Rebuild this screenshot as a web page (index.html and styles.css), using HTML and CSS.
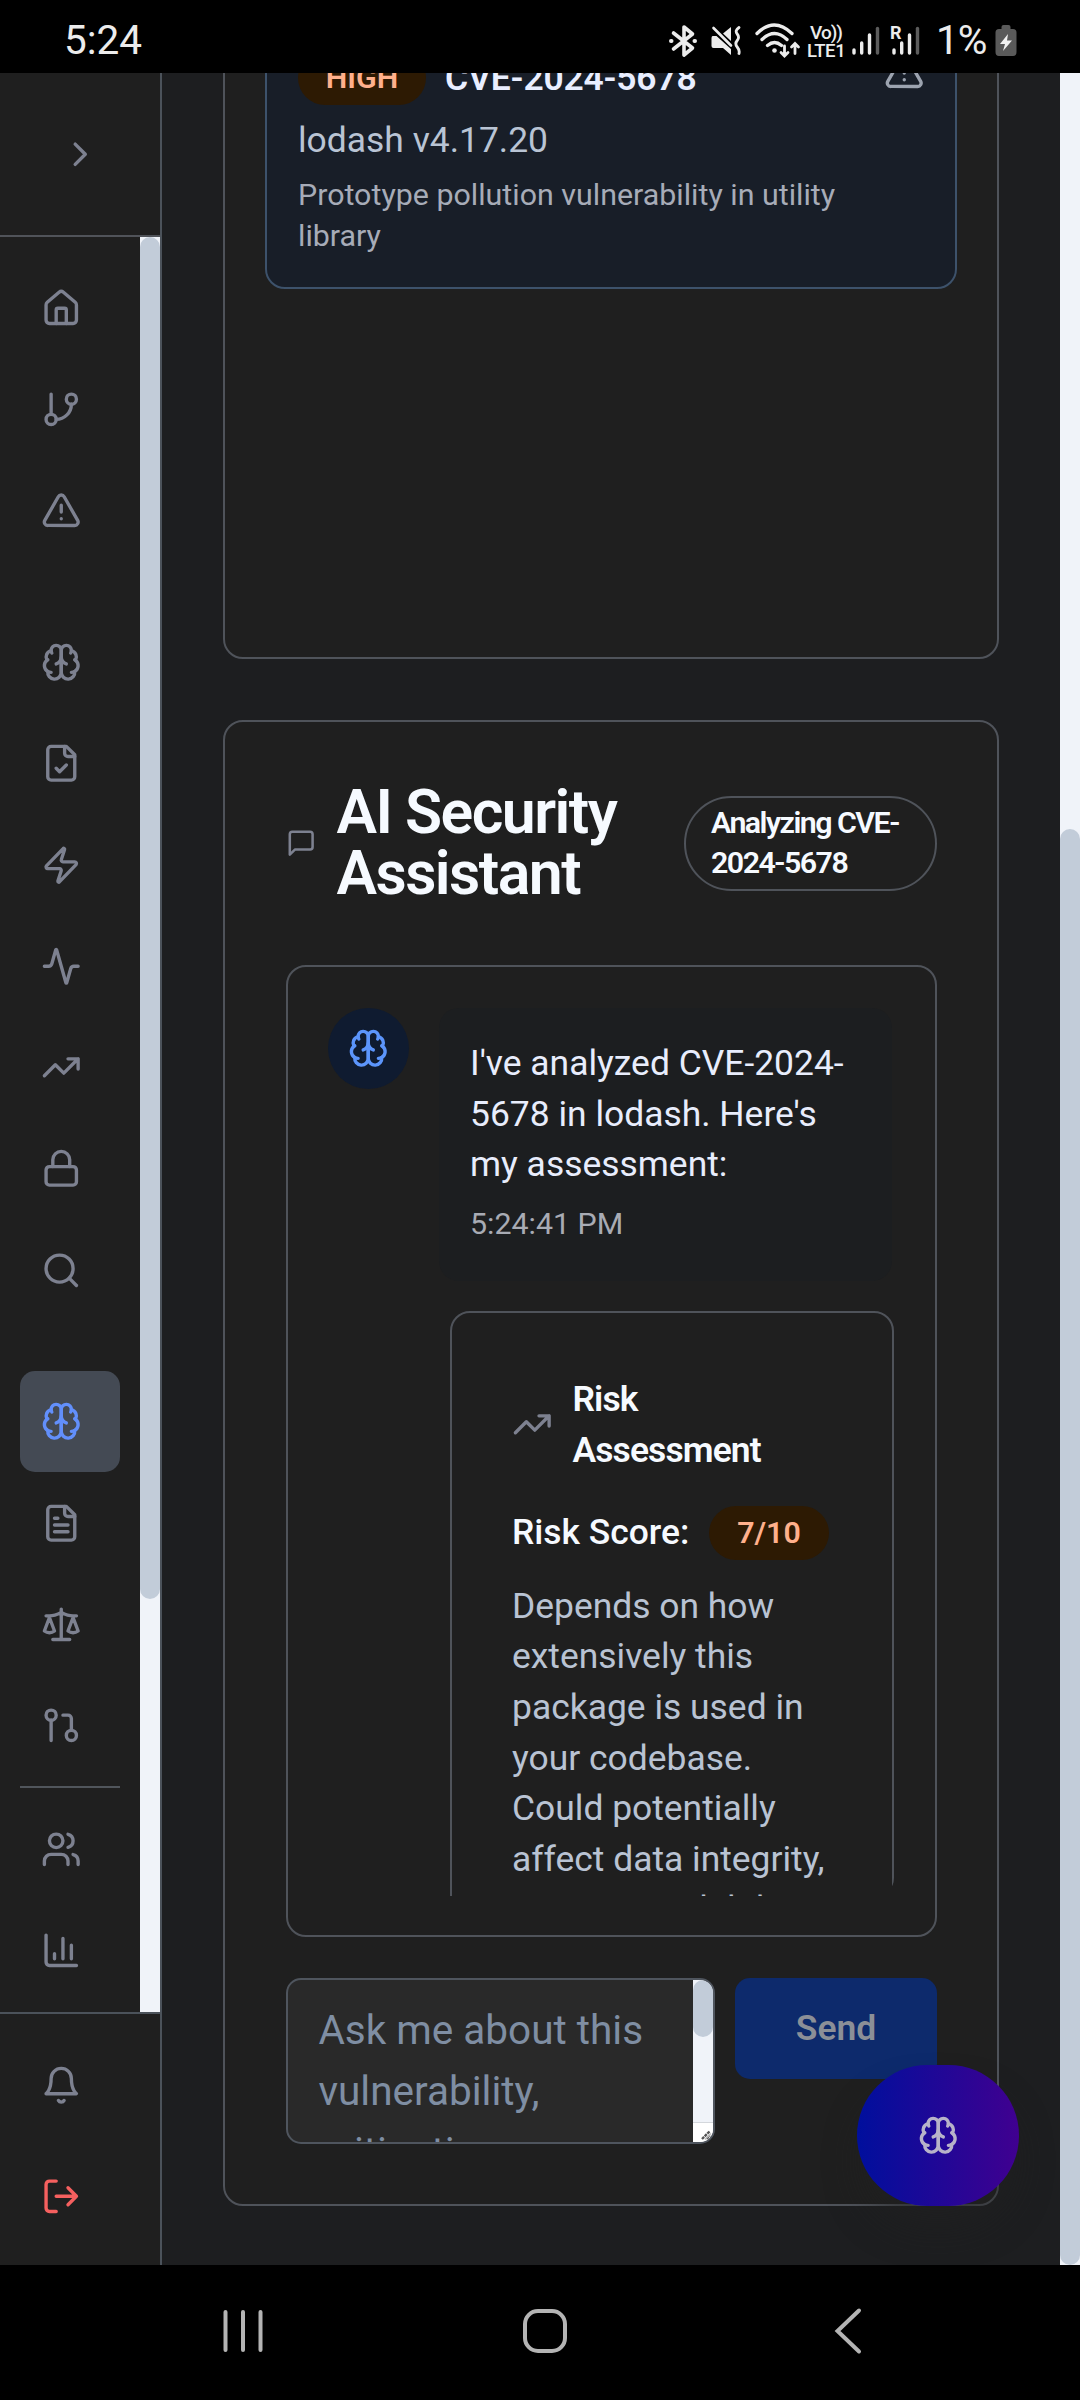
FILE: index.html
```html
<!DOCTYPE html>
<html lang="en">
<head>
<meta charset="utf-8">
<title>AI Security Assistant</title>
<link rel="stylesheet" href="styles.css">
</head>
<body>
<svg class="defs" aria-hidden="true">
  <symbol id="brain" viewBox="0 0 24 24">
    <path d="M12 5a3 3 0 1 0-5.997.125 4 4 0 0 0-2.526 5.77 4 4 0 0 0 .556 6.588A4 4 0 1 0 12 18Z"/>
    <path d="M12 5a3 3 0 1 1 5.997.125 4 4 0 0 1 2.526 5.77 4 4 0 0 1-.556 6.588A4 4 0 1 1 12 18Z"/>
    <path d="M15 13a4.5 4.5 0 0 1-3-4 4.5 4.5 0 0 1-3 4"/>
    <path d="M17.599 6.5a3 3 0 0 0 .399-1.375M6.003 5.125A3 3 0 0 0 6.401 6.5M3.477 10.896a4 4 0 0 1 .585-.396M19.938 10.5a4 4 0 0 1 .585.396M6 18a4 4 0 0 1-1.967-.516M19.967 17.484A4 4 0 0 1 18 18"/>
  </symbol>
  <symbol id="alert" viewBox="0 0 24 24">
    <path d="m21.73 18-8-14a2 2 0 0 0-3.48 0l-8 14A2 2 0 0 0 4 21h16a2 2 0 0 0 1.73-3M12 9v4M12 17h.01"/>
  </symbol>
  <symbol id="trend" viewBox="0 0 24 24">
    <path d="M22 7 13.5 15.5 8.5 10.5 2 17M16 7h6v6"/>
  </symbol>
</svg>

<header class="status-bar">
  <span class="clock">5:24</span>
  <div class="status-icons">
    <svg class="st-bt" width="28" height="34" viewBox="0 0 28 34" fill="none" stroke="#ececec" stroke-width="3.6" stroke-linejoin="round" stroke-linecap="round">
      <path d="M4.500 9 23.500 24 15 31V3l8.500 7L4.500 25"/><path d="M2 17h.5M25.500 17h.5" stroke-width="4"/>
    </svg>
    <svg class="st-mute" width="30" height="30" viewBox="0 0 30 30" fill="#ececec">
      <path d="M1.500 10h4L20 23v6l-8-7H2.500Q.500 22 .500 20v-8q0-1.500 1-2zM12 7.500 20 1v14z"/>
      <path d="M2.500 2 20 19.500" stroke="#ececec" stroke-width="2.600" stroke-linecap="round"/>
      <path d="M28 1.500q-4.500 3.200-1.800 6.500t0 6.500 0 6.500 1.800 6.500" fill="none" stroke="#ececec" stroke-width="2.800" stroke-linecap="round"/>
    </svg>
    <svg class="st-wifi" width="46" height="35" viewBox="0 0 46 35" fill="none" stroke="#ececec" stroke-width="3.300" stroke-linecap="round">
      <path d="M2 10.500q17-17 35 0M7 16.500q12.500-12 25 0M12.500 22.500q7-6 14 0"/>
      <circle cx="19.500" cy="27.500" r="2.300" fill="#ececec" stroke="none"/>
      <path d="M29.500 23v9.500m-3.500-3 3.500 3.500 3.500-3.500M40 30.500V21m-3.500 3 3.500-3.500 3.500 3.500" stroke-width="2.800"/>
    </svg>
    <div class="volte"><span class="vo">Vo))</span><span class="lte">LTE1</span></div>
    <svg class="st-sig" width="28" height="30" viewBox="0 0 28 30" stroke-width="3.400" stroke-linecap="round">
      <path d="M2 24v3M9.700 17v10M17.500 9v18" stroke="#ececec"/><path d="M25.500 2.500V27" stroke="#5c5c5c"/>
    </svg>
    <div class="roam">
      <span>R</span>
      <svg width="28" height="30" viewBox="0 0 28 30" stroke-width="3.400" stroke-linecap="round">
        <path d="M2 24v3M9.700 17v10M17.500 9v18" stroke="#ececec"/><path d="M25.500 2.500V27" stroke="#5c5c5c"/>
      </svg>
    </div>
    <span class="percent">1%</span>
    <svg class="st-batt" width="22" height="32" viewBox="0 0 22 32">
      <path d="M6.500 4V2q0-2 2-2h5q2 0 2 2v2H18q3.500 0 3.500 3.500V27q0 4-3.500 4H4q-3.500 0-3.500-4V7.500Q.500 4 4 4z" fill="#5a5a5a"/>
      <path d="M13 9 5 19h5l-2 7 9-10.500h-5z" fill="#f2f2f2"/>
    </svg>
  </div>
</header>

<div class="app">
  <aside class="sidebar">
    <div class="side-top">
      <svg class="icon" viewBox="0 0 24 24"><path d="m9 18 6-6-6-6"/></svg>
    </div>
    <div class="side-scroll">
      <nav class="side-nav">
        <div class="group">
          <a class="item"><svg class="icon" viewBox="0 0 24 24"><path d="M15 21v-8a1 1 0 0 0-1-1h-4a1 1 0 0 0-1 1v8"/><path d="M3 10a2 2 0 0 1 .709-1.528l7-5.999a2 2 0 0 1 2.582 0l7 5.999A2 2 0 0 1 21 10v9a2 2 0 0 1-2 2H5a2 2 0 0 1-2-2z"/></svg></a>
          <a class="item"><svg class="icon" viewBox="0 0 24 24"><path d="M6 3v12"/><circle cx="18" cy="6" r="3"/><circle cx="6" cy="18" r="3"/><path d="M18 9a9 9 0 0 1-9 9"/></svg></a>
          <a class="item"><svg class="icon"><use href="#alert"/></svg></a>
        </div>
        <div class="group">
          <a class="item"><svg class="icon"><use href="#brain"/></svg></a>
          <a class="item"><svg class="icon" viewBox="0 0 24 24"><path d="M15 2H6a2 2 0 0 0-2 2v16a2 2 0 0 0 2 2h12a2 2 0 0 0 2-2V7Z"/><path d="M14 2v4a2 2 0 0 0 2 2h4M9 15l2 2 4-4"/></svg></a>
          <a class="item"><svg class="icon" viewBox="0 0 24 24"><path d="M4 14a1 1 0 0 1-.78-1.63l9.900-10.200a.5.5 0 0 1 .86.46l-1.920 6.020A1 1 0 0 0 13 10h7a1 1 0 0 1 .78 1.630l-9.900 10.200a.5.5 0 0 1-.86-.46l1.920-6.020A1 1 0 0 0 11 14z"/></svg></a>
          <a class="item"><svg class="icon" viewBox="0 0 24 24"><path d="M22 12h-2.480a2 2 0 0 0-1.930 1.460l-2.350 8.360a.25.25 0 0 1-.48 0L9.240 2.180a.25.25 0 0 0-.48 0l-2.350 8.360A2 2 0 0 1 4.490 12H2"/></svg></a>
          <a class="item"><svg class="icon"><use href="#trend"/></svg></a>
          <a class="item"><svg class="icon" viewBox="0 0 24 24"><rect x="3" y="11" width="18" height="11" rx="2"/><path d="M7 11V7a5 5 0 0 1 10 0v4"/></svg></a>
          <a class="item"><svg class="icon" viewBox="0 0 24 24"><circle cx="11" cy="11" r="8"/><path d="m21 21-4.300-4.300"/></svg></a>
        </div>
        <div class="group">
          <a class="item active"><svg class="icon"><use href="#brain"/></svg></a>
          <a class="item"><svg class="icon" viewBox="0 0 24 24"><path d="M15 2H6a2 2 0 0 0-2 2v16a2 2 0 0 0 2 2h12a2 2 0 0 0 2-2V7Z"/><path d="M14 2v4a2 2 0 0 0 2 2h4M10 9H8M16 13H8M16 17H8"/></svg></a>
          <a class="item"><svg class="icon" viewBox="0 0 24 24"><path d="m16 16 3-8 3 8c-.87.65-1.920 1-3 1s-2.130-.35-3-1ZM2 16l3-8 3 8c-.87.65-1.920 1-3 1s-2.130-.35-3-1ZM7 21h10M12 3v18M3 7h2c2 0 5-1 7-2 2 1 5 2 7 2h2"/></svg></a>
          <a class="item"><svg class="icon" viewBox="0 0 24 24"><circle cx="18" cy="18" r="3"/><circle cx="6" cy="6" r="3"/><path d="M13 6h3a2 2 0 0 1 2 2v7M6 9v12"/></svg></a>
          <hr class="divider">
          <a class="item"><svg class="icon" viewBox="0 0 24 24"><path d="M16 21v-2a4 4 0 0 0-4-4H6a4 4 0 0 0-4 4v2"/><circle cx="9" cy="7" r="4"/><path d="M22 21v-2a4 4 0 0 0-3-3.870M16 3.130a4 4 0 0 1 0 7.750"/></svg></a>
          <a class="item"><svg class="icon" viewBox="0 0 24 24"><path d="M3 3v16a2 2 0 0 0 2 2h16M18 17V9M13 17V5M8 17v-3"/></svg></a>
        </div>
      </nav>
      <div class="track"><div class="thumb side-thumb"></div></div>
    </div>
    <div class="side-foot">
      <a class="item"><svg class="icon" viewBox="0 0 24 24"><path d="M6 8a6 6 0 0 1 12 0c0 7 3 9 3 9H3s3-2 3-9M10.300 21a1.940 1.940 0 0 0 3.400 0"/></svg></a>
      <a class="item logout"><svg class="icon" viewBox="0 0 24 24"><path d="M9 21H5a2 2 0 0 1-2-2V5a2 2 0 0 1 2-2h4M16 17l5-5-5-5M21 12H9"/></svg></a>
    </div>
  </aside>

  <main class="main">
    <section class="card vulns">
      <article class="vuln">
        <div class="vuln-head">
          <span class="badge">HIGH</span>
          <h3 class="vuln-id">CVE-2024-5678</h3>
          <svg class="icon vuln-icon"><use href="#alert"/></svg>
        </div>
        <p class="vuln-pkg">lodash v4.17.20</p>
        <p class="vuln-desc">Prototype pollution vulnerability in utility library</p>
      </article>
    </section>

    <section class="card assistant">
      <div class="assistant-head">
        <svg class="icon icon-sm" viewBox="0 0 24 24"><path d="M21 15a2 2 0 0 1-2 2H7l-4 4V5a2 2 0 0 1 2-2h14a2 2 0 0 1 2 2z"/></svg>
        <h2 class="title">AI Security Assistant</h2>
        <span class="context">Analyzing CVE-2024-5678</span>
      </div>
      <div class="chat">
        <div class="viewport">
          <div class="message">
            <div class="avatar"><svg class="icon"><use href="#brain"/></svg></div>
            <div class="bubble">
              <p>I've analyzed CVE-2024-5678 in lodash. Here's my assessment:</p>
              <time>5:24:41 PM</time>
            </div>
          </div>
          <div class="risk">
            <h4 class="risk-title"><svg class="icon"><use href="#trend"/></svg><span>Risk Assessment</span></h4>
            <div class="score"><span>Risk Score:</span><span class="badge">7/10</span></div>
            <p class="risk-text">Depends on how extensively this package is used in your codebase. Could potentially affect data integrity, system availability</p>
          </div>
        </div>
      </div>
      <div class="composer">
        <div class="input">
          <div class="placeholder">Ask me about this vulnerability, mitigation</div>
          <div class="track input-track">
            <div class="thumb input-thumb"></div>
            <div class="resizer"><svg width="20" height="18" viewBox="0 0 20 18" fill="none"><path d="M9 16 17 8M13.500 16 17 12.500" stroke="#555" stroke-width="2.400" stroke-dasharray="3 .8"/><path d="M12 16.500 18 10.500" stroke="#bbb" stroke-width="1.400"/></svg></div>
          </div>
        </div>
        <button class="send">Send</button>
      </div>
    </section>
  </main>
  <div class="track page-track"><div class="thumb page-thumb"></div></div>
  <button class="fab" aria-label="Assistant"><svg class="icon"><use href="#brain"/></svg></button>
</div>

<footer class="nav-bar">
  <svg width="44" height="46" viewBox="0 0 44 46" stroke="#b4b4b4" stroke-width="4" stroke-linecap="round"><path d="M4.500 4v38M22 4v38M39.500 4v38"/></svg>
  <svg class="nav-home" width="46" height="46" viewBox="0 0 46 46" fill="none" stroke="#b4b4b4" stroke-width="4"><rect x="3" y="3" width="40" height="40" rx="13"/></svg>
  <svg class="nav-back" width="28" height="48" viewBox="0 0 28 48" fill="none" stroke="#b4b4b4" stroke-width="4" stroke-linecap="round"><path d="M25 3.500 3.500 24 25 44.500"/></svg>
</footer>
</body>
</html>
```
FILE: styles.css
```css
* { box-sizing: border-box; }
body {
  margin: 0;
  width: 1080px;
  height: 2400px;
  overflow: hidden;
  display: flex;
  flex-direction: column;
  background: #000;
  color: #e8edfc;
  font-family: Roboto, "Liberation Sans", sans-serif;
  font-size: 35.44px;
  line-height: 50.62px;
}
h2, h3, h4, p, hr { margin: 0; }
button { border: 0; padding: 0; font: inherit; }
.defs { position: absolute; width: 0; height: 0; }
.icon {
  display: block;
  flex: none;
  width: 40.5px;
  height: 40.5px;
  fill: none;
  stroke: currentColor;
  stroke-width: 2;
  stroke-linecap: round;
  stroke-linejoin: round;
  color: #7d8190;
}
.icon-sm { width: 30.4px; height: 30.4px; }

/* Device status bar */
.status-bar {
  flex: none;
  height: 73px;
  padding: 0 63px 0 64px;
  display: flex;
  justify-content: space-between;
  color: #ececec;
}
.clock { font-size: 40.5px; line-height: 81px; }
.status-icons { display: flex; align-items: flex-start; }
.st-bt { margin: 24px 14px 0 0; }
.st-mute { margin: 26px 14px 0 0; }
.st-wifi { margin: 23px 6px 0 0; }
.volte { width: 38px; margin: 25px 7px 0 0; display: flex; flex-direction: column; align-items: center; font-weight: 500; font-size: 18.5px; line-height: 16px; }
.vo { letter-spacing: -1px; font-size: 19px; }
.lte { letter-spacing: -.4px; line-height: 20px; }
.st-sig { margin: 26px 10px 0 0; }
.roam { display: grid; margin: 26px 16px 0 0; }
.roam > * { grid-area: 1 / 1; }
.roam svg { margin-left: 2px; }
.roam span { font-size: 18px; line-height: 14px; font-weight: 700; }
.percent { font-size: 40.5px; line-height: 81px; letter-spacing: -1px; margin-right: 8.5px; }
.st-batt { margin-top: 25px; }

.app {
  position: relative;
  flex: none;
  height: 2191.5px;
  display: flex;
  overflow: hidden;
  background: #1d1e20;
}

/* Sidebar */
.sidebar {
  flex: none;
  width: 162px;
  display: flex;
  flex-direction: column;
  background: #1f1f1f;
  border-right: 2px solid #4b525a;
}
.side-top { height: 164px; flex: none; display: grid; place-items: center; border-bottom: 2px solid #505359; }
.side-scroll { height: 1775px; flex: none; display: flex; }
.side-nav { width: 140px; padding: 20px; display: flex; flex-direction: column; gap: 50.6px; }
.group { display: flex; flex-direction: column; }
.item { width: 100px; height: 101.25px; flex: none; padding: 1px 0 0 20.7px; display: flex; align-items: center; border-radius: 15px; }
.active { background: #444a54; padding-top: 0; }
.active .icon { color: #628ffb; }
.divider { border: 0; height: 2.5px; margin: 10px 0; background: #50555b; }
.side-foot { flex: 1; border-top: 2px solid #4b525a; padding: 20px; display: flex; flex-direction: column; gap: 10px; }
.logout .icon { color: #f5605f; }

.track { width: 20px; flex: none; background: #f0f3f9; }
.thumb { background: #c2ccd9; border-radius: 10px; }
.side-thumb { height: 1362px; }
.page-track { display: flex; flex-direction: column; justify-content: flex-end; }
.page-thumb { height: 1436px; }

/* Main column, scrolled to its end */
.main {
  flex: 1;
  min-width: 0;
  padding: 0 61px 59px;
  display: flex;
  flex-direction: column;
  justify-content: flex-end;
  gap: 61px;
  overflow: hidden;
}
.card { flex: none; border: 2px solid #4f535a; border-radius: 20px; background: #1f1f1f; }
.vulns { height: 760px; padding: 0 40px 368px; display: flex; flex-direction: column; justify-content: flex-end; }
.vuln { border: 2px solid #3d526b; border-radius: 20px; background: #181e28; padding: 30.4px 30.4px 31px 31px; }
.vuln-head { display: flex; align-items: center; height: 54px; }
.badge { padding: 0 27.8px; border-radius: 27px; background: #2d1a03; color: #ffb08c; font-size: 30.38px; line-height: 53px; height: 54px; font-weight: 600; }
.vuln-id { margin-left: 19px; font-size: 35.44px; letter-spacing: -.2px; font-weight: 600; color: #e9eeff; }
.vuln-icon { margin: 0 0 14px auto; color: #9ca3af; }
.vuln-pkg { margin-top: 10px; color: #b9c4d4; }
.vuln-desc { margin-top: 8px; font-size: 30.38px; line-height: 41px; color: #a7acb8; }

.assistant { height: 1486px; padding: 61px 60px 61px 61px; display: flex; flex-direction: column; }
.assistant-head { flex: none; display: flex; align-items: center; height: 121.5px; margin-bottom: 60.5px; letter-spacing: -1.52px; }
.title { margin-left: 20px; width: 327px; font-size: 60.75px; line-height: 61px; font-weight: 600; letter-spacing: -1.52px; color: #f6faff; }
.context { margin-left: auto; width: 253px; height: 95px; border: 2px solid #4f535a; border-radius: 48px; padding: 5px 25px; font-size: 30.38px; line-height: 40.5px; font-weight: 600; color: #f6faff; }
.chat { flex: none; height: 972px; border: 2px solid #4f535a; border-radius: 20px; padding: 41px 41px 39px 40px; }
.viewport { height: 888px; overflow: hidden; border-radius: 18px; }
.message { display: flex; gap: 30px; }
.avatar { flex: none; width: 81px; height: 81px; border-radius: 50%; background: #0f1b30; display: grid; place-items: center; }
.avatar .icon { color: #5c95fb; }
.bubble { width: 453px; height: 273px; border-radius: 20px; background: #1c1e20; padding: 30.5px 30px 0 31px; }
.bubble time { display: block; margin-top: 14px; font-size: 30.38px; line-height: 40.5px; color: #a8abb4; }
.risk { margin: 30px 0 0 122px; border: 2px solid #4f535a; border-radius: 20px; padding: 61.5px 60px 0; height: 800px; }
.risk-title { display: flex; align-items: center; gap: 20px; font-size: 35.44px; font-weight: 600; letter-spacing: -.88px; color: #f6faff; }
.score { display: flex; align-items: center; gap: 20px; margin-top: 30.4px; font-weight: 500; color: #f6faff; }
.risk-text { margin: 21px -5px 0 0; color: #b9c3d3; }

.composer { flex: none; display: flex; align-items: flex-start; gap: 20px; margin-top: 41px; }
.input { width: 429px; height: 166px; display: flex; overflow: hidden; border: 2px solid #4f555e; border-radius: 15px; background: #292929; }
.placeholder { flex: 1; padding: 20px 10px 0 30.4px; font-size: 40.5px; line-height: 61px; color: #7f8ea3; }
.input-track { display: flex; flex-direction: column; justify-content: space-between; }
.input-thumb { height: 57px; }
.resizer { height: 20px; background: #fff; border-top: 1px solid #d4d7dc; }
.resizer svg { display: block; }
.send { flex: 1; height: 101px; border-radius: 15px; background: #0d2a6c; color: #8b8f97; font-size: 35.44px; font-weight: 600; }

.fab {
  position: absolute;
  right: 61px;
  bottom: 59px;
  width: 162px;
  height: 141px;
  border-radius: 71px;
  background: linear-gradient(90deg, #000f9d, #400090);
  box-shadow: 0 25px 38px -8px rgba(33, 33, 33, .7);
  display: grid;
  place-items: center;
}
.fab .icon { color: #b7b3c9; }

/* Device navigation bar */
.nav-bar { flex: 1; padding: 0 0 3px 221px; display: flex; align-items: center; }
.nav-home { margin-left: 257px; }
.nav-back { margin-left: 266px; }
```
